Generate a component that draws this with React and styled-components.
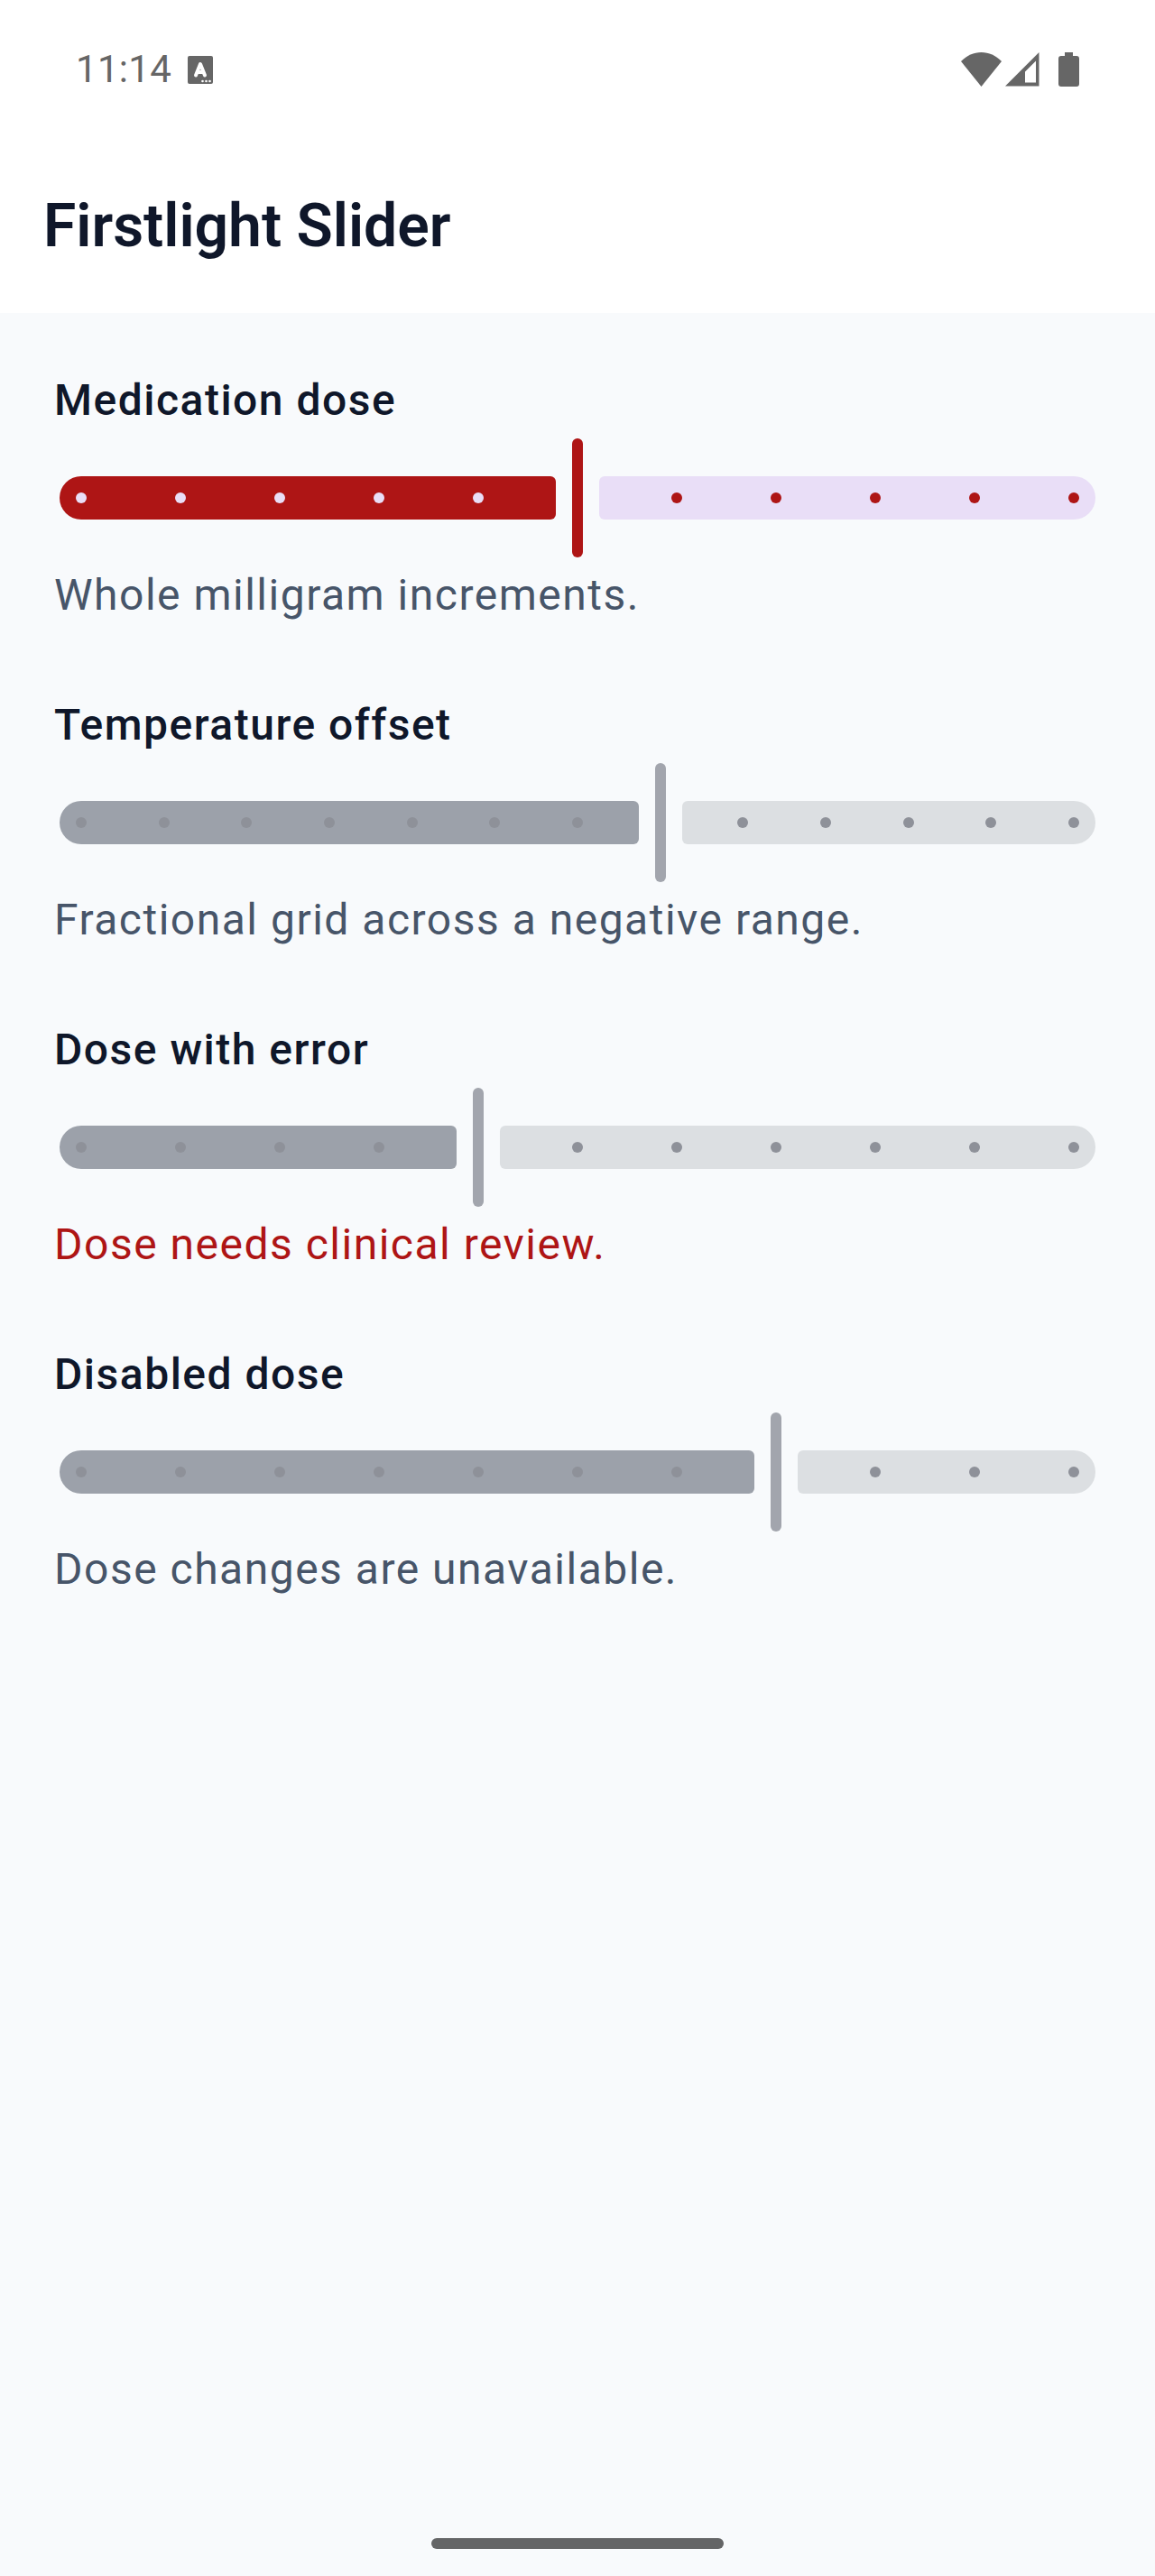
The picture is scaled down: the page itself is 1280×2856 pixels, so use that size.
import React from 'react';
import styled, {createGlobalStyle} from 'styled-components';

const GlobalStyle = createGlobalStyle`
  html, body { margin: 0; padding: 0; background: #f8fafc; }
  * { box-sizing: border-box; }
`;

const Screen = styled.div`
  width: 1280px;
  height: 2856px;
  display: flex;
  flex-direction: column;
  background: #f8fafc;
  font-family: Roboto, "Liberation Sans", sans-serif;
`;

const Header = styled.header`
  height: 347px;
  flex: none;
  background: #ffffff;
  display: flex;
  flex-direction: column;
`;

const StatusBar = styled.div`
  height: 154px;
  padding: 0 84px;
  display: flex;
  align-items: center;
  justify-content: space-between;
  color: #666666;
`;

const StatusGroup = styled.div`
  display: flex;
  align-items: center;
  gap: ${p => p.$gap || 0}px;
`;

const Clock = styled.span`
  font-size: 42px;
  line-height: 50px;
  letter-spacing: 0.3px;
`;

const Title = styled.h1`
  margin: 57px 0 0;
  padding: 0 48px;
  font-size: 66px;
  line-height: 80px;
  font-weight: 600;
  color: #0f172a;
`;

const List = styled.main`
  flex: 1;
  padding: 71px 60px 0;
  display: flex;
  flex-direction: column;
  gap: 92px;
`;

const Field = styled.section`
  display: flex;
  flex-direction: column;
`;

const Label = styled.div`
  font-size: 48px;
  line-height: 52px;
  font-weight: 500;
  letter-spacing: 1.5px;
  color: #0f172a;
`;

const Track = styled.div`
  position: relative;
  margin: 16px 0 0 6px;
  height: 132px;
  width: 1148px;
  display: flex;
  align-items: center;
`;

const Active = styled.div`
  height: 48px;
  flex: none;
  border-radius: 24px 6px 6px 24px;
  background: ${p => (p.$muted ? '#9ca1aa' : '#ae1515')};
`;

const Inactive = styled.div`
  height: 48px;
  flex: 1;
  border-radius: 6px 24px 24px 6px;
  background: ${p => (p.$muted ? '#dcdfe2' : '#e9def7')};
`;

const Thumb = styled.div`
  width: 12px;
  height: 132px;
  flex: none;
  margin: 0 18px;
  border-radius: 6px;
  background: ${p => (p.$muted ? '#a2a5ad' : '#ae1515')};
`;

const Tick = styled.span`
  position: absolute;
  top: 60px;
  width: 12px;
  height: 12px;
  border-radius: 50%;
  background: ${p => p.$color};
`;

const Help = styled.div`
  margin-top: 16px;
  font-size: 48px;
  line-height: 52px;
  letter-spacing: 1.5px;
  color: ${p => (p.$error ? '#ae1515' : '#475569')};
`;

const HomeBar = styled.div`
  flex: none;
  align-self: center;
  width: 324px;
  height: 12px;
  margin-bottom: 30px;
  border-radius: 6px;
  background: #646566;
`;

const fields = [
  {label: 'Medication dose', help: 'Whole milligram increments.', steps: 10, value: 5},
  {label: 'Temperature offset', help: 'Fractional grid across a negative range.', steps: 12, value: 7, muted: true},
  {label: 'Dose with error', help: 'Dose needs clinical review.', steps: 10, value: 4, muted: true, error: true},
  {label: 'Disabled dose', help: 'Dose changes are unavailable.', steps: 10, value: 7, muted: true},
];

const TRACK_WIDTH = 1148;
const TICK_INSET = 24;

const Slider = ({steps, value, muted}) => {
  const stepWidth = (TRACK_WIDTH - TICK_INSET * 2) / steps;
  const thumbCenter = TICK_INSET + stepWidth * value;
  const ticks = [];
  for (let i = 0; i <= steps; i++) {
    if (i === value) continue;
    let color;
    if (muted) color = '#8e9199';
    else color = i < value ? '#e9def7' : '#ae1515';
    ticks.push(<Tick key={i} $color={color} style={{left: TICK_INSET + stepWidth * i - 6}} />);
  }
  return (
    <Track>
      <Active $muted={muted} style={{width: thumbCenter - 24}} />
      <Thumb $muted={muted} />
      <Inactive $muted={muted} />
      {ticks}
    </Track>
  );
};

const WifiIcon = () => (
  <svg width="45" height="38" viewBox="0 0 45 38">
    <path d="M0 10C6.500 3.500 14 0 22.500 0S38.500 3.500 45 10L22.500 38z" fill="#666666" />
  </svg>
);

const SignalIcon = () => (
  <svg width="38" height="38" viewBox="0 0 38 38">
    <path fillRule="evenodd" d="M0 37.500L37.500 0v37.500zM22 33.500h12V9.500l-12 12z" fill="#666666" />
  </svg>
);

const BatteryIcon = () => (
  <svg width="23" height="38" viewBox="0 0 23 38">
    <path d="M7 0h9v4h4a3 3 0 0 1 3 3v28a3 3 0 0 1-3 3H3a3 3 0 0 1-3-3V7a3 3 0 0 1 3-3h4z" fill="#666666" />
  </svg>
);

const KeyboardIcon = () => (
  <svg width="28" height="31" viewBox="0 0 28 31">
    <rect width="28" height="31" rx="2" fill="#666666" />
    <path d="M9 21.500L14 9l5 12.500M11 18h6" fill="none" stroke="#ffffff" strokeWidth="4" strokeLinecap="round" strokeLinejoin="round" />
    <circle cx="16.500" cy="28" r="1.300" fill="#ffffff" />
    <circle cx="20.500" cy="28" r="1.300" fill="#ffffff" />
    <circle cx="24.500" cy="28" r="1.300" fill="#ffffff" />
  </svg>
);

const App = () => (
  <Screen>
    <GlobalStyle />
    <Header>
      <StatusBar>
        <StatusGroup $gap={18}>
          <Clock>11:14</Clock>
          <KeyboardIcon />
        </StatusGroup>
        <StatusGroup $gap={21}>
          <StatusGroup $gap={4}>
            <WifiIcon />
            <SignalIcon />
          </StatusGroup>
          <BatteryIcon />
        </StatusGroup>
      </StatusBar>
      <Title>Firstlight Slider</Title>
    </Header>
    <List>
      {fields.map(f => (
        <Field key={f.label}>
          <Label>{f.label}</Label>
          <Slider steps={f.steps} value={f.value} muted={f.muted} />
          <Help $error={f.error}>{f.help}</Help>
        </Field>
      ))}
    </List>
    <HomeBar />
  </Screen>
);

export default App;
